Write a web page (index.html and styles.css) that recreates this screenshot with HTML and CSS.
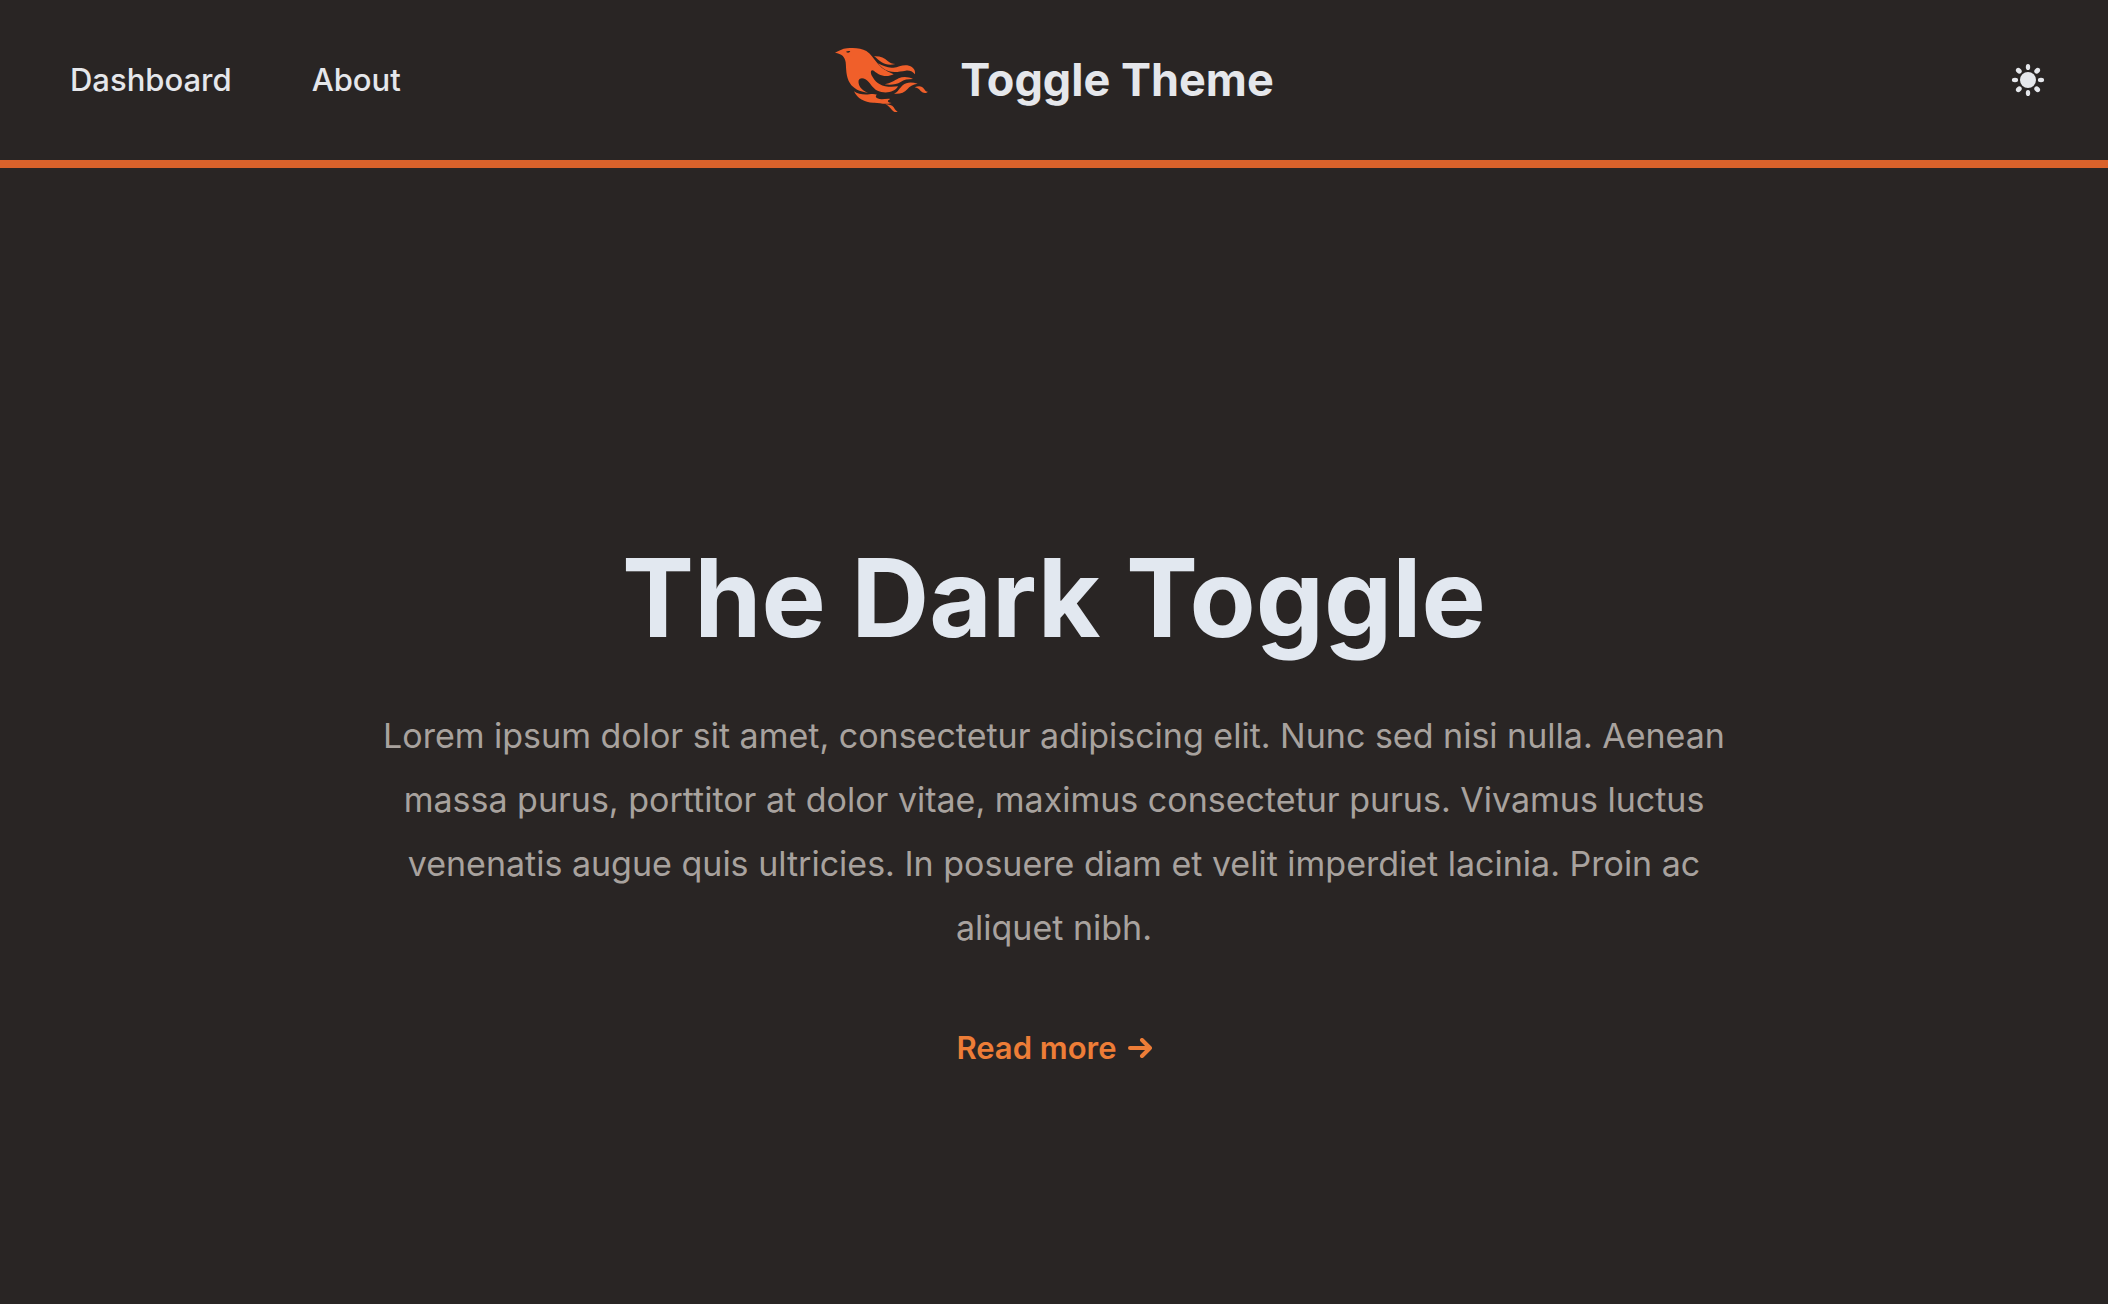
FILE: index.html
```html
<!DOCTYPE html>
<html lang="en">
<head>
<meta charset="utf-8">
<meta name="viewport" content="width=device-width, initial-scale=1">
<title>Toggle Theme</title>
<link rel="stylesheet" href="styles.css">
</head>
<body>
<header class="site-header">
  <nav class="site-nav" aria-label="Main">
    <a class="nav-link" href="#dashboard">Dashboard</a>
    <a class="nav-link" href="#about">About</a>
  </nav>
  <a class="brand" href="#home">
    <svg class="brand-logo" viewBox="42 33 282 198" aria-hidden="true">
      <path fill-rule="evenodd" d="M45 50C58 45 66 38 81 37C101 34 124 36 139 45C153 54 161 68 170 79C181 93 194 104 221 115C207 122 190 122 176 115C168 111 163 104 157 103C151 103 152 113 156 120C164 135 178 150 205 152C216 153 226 152 234 151C226 166 205 172 184 168C164 164 157 151 146 138C137 126 120 122 116 133C113 147 124 164 144 170C119 168 100 158 90 142C77 123 79 96 77 79C75 62 65 53 45 50ZM78 47C81 51 89 51 91 46C87 44 82 45 78 47Z"/>
      <path d="M162 61C181 60 193 66 203 75C210 81 217 84 226 84C210 89 196 86 185 79C176 73 170 66 162 61Z"/>
      <path d="M174 82C190 90 204 97 220 95C237 93 249 84 267 89C280 93 287 102 285 115C276 105 269 103 257 104C240 106 226 111 207 106C193 102 184 94 174 82Z"/>
      <path d="M194 145C212 142 222 134 236 127C249 121 265 122 279 129C263 129 252 131 242 138C230 146 211 148 194 145Z"/>
      <path d="M222 173C234 169 238 157 248 148C260 137 276 138 293 143C278 145 269 151 262 160C252 171 239 175 222 173Z"/>
      <path d="M284 154C298 148 307 151 313 160C316 165 319 168 324 167C318 173 309 172 302 165C297 159 292 155 284 154Z"/>
      <path d="M102 166C113 174 131 177 148 175C157 174 164 174 171 176C166 179 166 184 172 187C184 193 197 187 211 189C199 194 203 200 215 201C194 207 180 200 163 200C135 201 112 188 102 166Z"/>
      <path d="M196 205C207 205 216 207 221 214C224 219 227 224 233 227C226 230 220 227 216 222C210 215 205 209 196 205Z"/>
    </svg>
    <span class="brand-name">Toggle Theme</span>
  </a>
  <button class="theme-toggle" type="button" aria-label="Toggle theme">
    <svg class="theme-icon" viewBox="0 0 32 32" aria-hidden="true">
      <circle cx="16" cy="16" r="8"/>
      <g>
        <ellipse cx="16" cy="3" rx="2.2" ry="3.1"/>
        <ellipse cx="16" cy="29" rx="2.2" ry="3.1"/>
        <ellipse cx="3" cy="16" rx="3.1" ry="2.2"/>
        <ellipse cx="29" cy="16" rx="3.1" ry="2.2"/>
      </g>
      <g transform="rotate(45 16 16)">
        <ellipse cx="16" cy="3" rx="2.5" ry="3.2"/>
        <ellipse cx="16" cy="29" rx="2.5" ry="3.2"/>
        <ellipse cx="3" cy="16" rx="3.2" ry="2.5"/>
        <ellipse cx="29" cy="16" rx="3.2" ry="2.5"/>
      </g>
    </svg>
  </button>
</header>
<main class="hero">
  <h1 class="hero-title">The Dark Toggle</h1>
  <p class="hero-text">Lorem ipsum dolor sit amet, consectetur adipiscing elit. Nunc sed nisi nulla. Aenean massa purus, porttitor at dolor vitae, maximus consectetur purus. Vivamus luctus venenatis augue quis ultricies. In posuere diam et velit imperdiet lacinia. Proin ac aliquet nibh.</p>
  <a class="hero-link" href="#more">Read more
    <svg class="arrow" viewBox="0 0 24 20" aria-hidden="true"><path d="M2 10H22M14 2L22 10L14 18"/></svg>
  </a>
</main>
</body>
</html>
```
FILE: styles.css
```css
* {
  box-sizing: border-box;
}

body {
  margin: 0;
  min-height: 100vh;
  background: #292524;
  color: #e5e7eb;
  font-family: Inter, "Liberation Sans", sans-serif;
}

a {
  color: inherit;
  text-decoration: none;
}

.site-header {
  display: grid;
  grid-template-columns: 1fr auto 1fr;
  align-items: center;
  padding: 48px 64px;
  border-bottom: 8px solid #d9622b;
}

.site-nav {
  display: flex;
  gap: 80px;
  padding-left: 6px;
}

.nav-link {
  font-size: 31px;
  line-height: 48px;
  font-weight: 500;
}

.brand {
  display: flex;
  align-items: center;
  gap: 32px;
}

.brand-logo {
  width: 94px;
  height: 66px;
  margin: -1px 0;
  fill: #f05f2a;
}

.brand-name {
  font-size: 45px;
  line-height: 64px;
  font-weight: 700;
}

.theme-toggle {
  justify-self: end;
  display: flex;
  padding: 0;
  border: 0;
  background: none;
  color: inherit;
  cursor: pointer;
}

.theme-icon {
  width: 32px;
  height: 32px;
  overflow: visible;
  fill: currentColor;
}

.hero {
  display: flex;
  flex-direction: column;
  align-items: center;
  padding: 370px 32px 160px;
  text-align: center;
}

.hero-title {
  margin: 0;
  color: #e2e8f0;
  font-size: 108px;
  line-height: 120px;
  font-weight: 700;
}

.hero-text {
  max-width: 1344px;
  margin: 46px 0 0;
  color: #a8a29e;
  font-size: 34px;
  line-height: 64px;
}

.hero-link {
  display: flex;
  align-items: center;
  gap: 11px;
  margin-top: 64px;
  color: #ed7d37;
  font-size: 31px;
  line-height: 48px;
  font-weight: 600;
}

.arrow {
  width: 24px;
  height: 20px;
  fill: none;
  stroke: currentColor;
  stroke-width: 4;
  stroke-linecap: round;
  stroke-linejoin: round;
}
```
